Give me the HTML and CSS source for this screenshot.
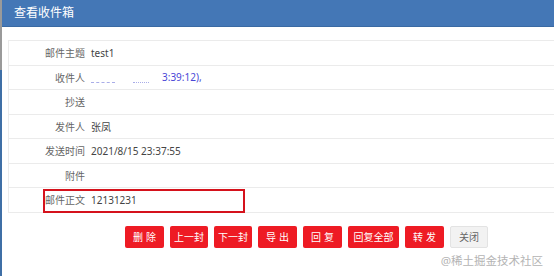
FILE: index.html
```html
<!DOCTYPE html>
<html>
<head>
  <meta charset="UTF-8">
  <title>查看收件箱</title>
  <link rel="stylesheet" href="styles.css">
</head>
<body>

  <div class="dialog">
    <div class="dialog-title">查看收件箱</div>

    <div class="dialog-body">
      <div class="mail-info">
        <div class="row">
          <div class="label">邮件主题</div>
          <div class="value">test1</div>
        </div>
        <div class="row">
          <div class="label">收件人</div>
          <div class="value"><span class="masked"></span><span class="masked dots"></span><span class="addr">3:39:12),</span></div>
        </div>
        <div class="row">
          <div class="label">抄送</div>
          <div class="value"></div>
        </div>
        <div class="row">
          <div class="label">发件人</div>
          <div class="value">张凤</div>
        </div>
        <div class="row">
          <div class="label">发送时间</div>
          <div class="value">2021/8/15 23:37:55</div>
        </div>
        <div class="row">
          <div class="label">附件</div>
          <div class="value"></div>
        </div>
        <div class="row marked">
          <div class="label">邮件正文</div>
          <div class="value">12131231</div>
        </div>
      </div>

      <div class="actions">
        <button class="btn spaced">删除</button>
        <button class="btn">上一封</button>
        <button class="btn">下一封</button>
        <button class="btn spaced">导出</button>
        <button class="btn spaced">回复</button>
        <button class="btn wide">回复全部</button>
        <button class="btn spaced">转发</button>
        <button class="btn btn-close">关闭</button>
      </div>
    </div>
  </div>

  <div class="watermark">@稀土掘金技术社区</div>

</body>
</html>
```

FILE: styles.css
```css
html, body {
  height: 100%;
}

body {
  margin: 0;
  overflow: hidden;
  font-family: "Noto Sans", "Noto Sans CJK SC", sans-serif;
  background: linear-gradient(#9a9a9a 0, #9a9a9a 70px, #3f6fa6 70px);
}

.dialog {
  margin-left: 2px;
  height: 100%;
  background: #fff;
}

.dialog-title {
  height: 26px;
  line-height: 26px;
  padding-left: 12px;
  background: #4477b6;
  border-bottom: 1px solid #3a6aa3;
  color: #fff;
  font-size: 12px;
}

.dialog-body {
  padding: 13px 0 0 6px;
}

.mail-info {
  margin-right: -20px;
  border-top: 1px solid #ebebeb;
  border-left: 1px solid #ebebeb;
}

.row {
  display: grid;
  grid-template-columns: 76px 1fr;
  align-items: center;
  height: 23.5px;
  border-bottom: 1px solid #ebebeb;
  font-size: 10px;
}

.label {
  text-align: right;
  color: #666;
}

.value {
  padding-left: 6px;
  color: #444;
}

.masked {
  display: inline-block;
  width: 24px;
  height: 3px;
  margin-right: 18px;
  border-bottom: 1px dashed #a9ade8;
  vertical-align: -2px;
}

.masked.dots {
  width: 16px;
  margin-right: 13px;
  border-bottom-style: dotted;
}

.addr {
  color: #4a46d6;
}

.row.marked {
  position: relative;
}

.row.marked::after {
  content: "";
  position: absolute;
  left: 34px;
  top: 1px;
  width: 202px;
  height: 24px;
  box-sizing: border-box;
  border: 2px solid #d5121c;
}

.actions {
  display: flex;
  gap: 6px;
  margin-top: 13px;
  padding-left: 117px;
}

.btn {
  height: 22px;
  min-width: 38px;
  padding: 0 4px;
  border: none;
  border-radius: 2px;
  background-color: #ee1b24;
  color: #fff;
  font-family: inherit;
  font-size: 10px;
  cursor: pointer;
}

.btn.spaced {
  min-width: 39px;
  letter-spacing: 3px;
  text-indent: 3px;
}

.btn.wide {
  min-width: 51px;
}

.btn-close {
  min-width: 38px;
  background-color: #f2f2f2;
  border: 1px solid #e3e3e3;
  color: #666;
}

.watermark {
  position: absolute;
  right: 11px;
  bottom: 8px;
  font-size: 11.5px;
  color: #b4b4b4;
}
```
